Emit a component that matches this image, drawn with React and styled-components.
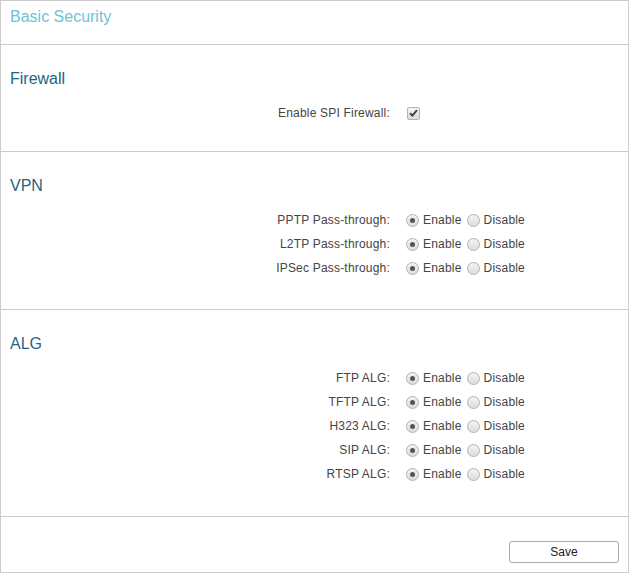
import styled, { createGlobalStyle } from "styled-components";

const GlobalStyle = createGlobalStyle`
	body {
		margin: 0;
		background: #fff;
		font-family: "Liberation Sans", Arial, sans-serif;
	}
`;

const vpnRows = ["PPTP Pass-through:", "L2TP Pass-through:", "IPSec Pass-through:"];
const algRows = ["FTP ALG:", "TFTP ALG:", "H323 ALG:", "SIP ALG:", "RTSP ALG:"];

function RadioPair() {
	return (
		<Controls>
			<Option>
				<Radio $checked />
				Enable
			</Option>
			<Option>
				<Radio />
				Disable
			</Option>
		</Controls>
	);
}

export default function App() {
	return (
		<>
			<GlobalStyle />
			<Panel>
				<Header>Basic Security</Header>

				<Section $bottom={26}>
					<Heading>Firewall</Heading>
					<Row>
						<Label>Enable SPI Firewall:</Label>
						<Controls>
							<Checkbox>
								<svg width="9" height="8" viewBox="0 0 9 8">
									<path d="M1 4.2 L3.4 6.6 L8 1.2" fill="none" stroke="#444" strokeWidth="2" />
								</svg>
							</Checkbox>
						</Controls>
					</Row>
				</Section>

				<Section $bottom={29}>
					<Heading>VPN</Heading>
					{vpnRows.map((label) => (
						<Row key={label}>
							<Label>{label}</Label>
							<RadioPair />
						</Row>
					))}
				</Section>

				<Section $bottom={30}>
					<Heading>ALG</Heading>
					{algRows.map((label) => (
						<Row key={label}>
							<Label>{label}</Label>
							<RadioPair />
						</Row>
					))}
				</Section>

				<Footer>
					<SaveButton>Save</SaveButton>
				</Footer>
			</Panel>
		</>
	);
}

const Panel = styled.div`
	width: 629px;
	height: 573px;
	box-sizing: border-box;
	border: 1px solid #cccccc;
	display: flex;
	flex-direction: column;
`;

const Header = styled.div`
	height: 44px;
	box-sizing: border-box;
	padding: 6px 9px 0;
	font-size: 16px;
	line-height: 20px;
	color: #6cc3d6;
	border-bottom: 1px solid #cccccc;
`;

const Section = styled.div`
	padding: 23px 0 ${(p) => p.$bottom}px;
	border-bottom: 1px solid #cccccc;
`;

const Heading = styled.div`
	padding-left: 9px;
	font-size: 16px;
	line-height: 22px;
	color: #1f6582;
	margin-bottom: 11px;
`;

const Row = styled.div`
	display: grid;
	grid-template-columns: 389px auto;
	column-gap: 16px;
	height: 24px;
	align-items: center;
	font-size: 12px;
	letter-spacing: 0.2px;
	color: #444;
`;

const Label = styled.div`
	text-align: right;
`;

const Controls = styled.div`
	display: flex;
	align-items: center;
	gap: 5px;
`;

const Option = styled.label`
	display: flex;
	align-items: center;
	gap: 4px;
	color: #444;
`;

const Radio = styled.span`
	width: 11px;
	height: 11px;
	border-radius: 50%;
	border: 1px solid #b3b3b3;
	background: linear-gradient(#f4f4f4, #dcdcdc);
	display: flex;
	align-items: center;
	justify-content: center;

	&::after {
		content: "";
		width: 5px;
		height: 5px;
		border-radius: 50%;
		background: #555;
		display: ${(p) => (p.$checked ? "block" : "none")};
	}
`;

const Checkbox = styled.span`
	width: 11px;
	height: 11px;
	margin-left: 1px;
	border: 1px solid #b3b3b3;
	border-radius: 2px;
	background: linear-gradient(#f4f4f4, #dcdcdc);
	display: flex;
	align-items: center;
	justify-content: center;
`;

const Footer = styled.div`
	flex: 1;
	display: flex;
	justify-content: flex-end;
	align-items: flex-start;
	padding: 24px 9px 0;
`;

const SaveButton = styled.button`
	width: 110px;
	height: 22px;
	border: 1px solid #aaaaaa;
	border-radius: 3px;
	background: #fff;
	font-family: "Liberation Sans", Arial, sans-serif;
	font-size: 12px;
	color: #222;
	padding: 0;
`;
